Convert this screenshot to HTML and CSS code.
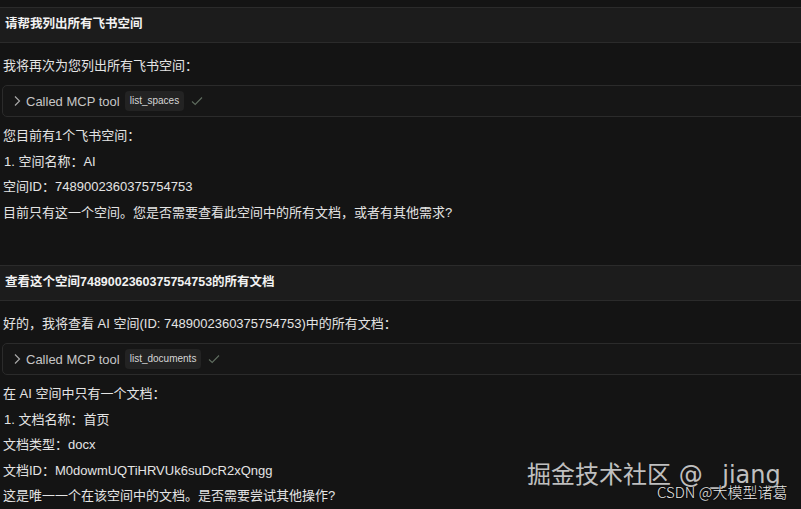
FILE: index.html
```html
<!DOCTYPE html>
<html lang="zh-CN">
<head>
  <meta charset="UTF-8">
  <meta name="viewport" content="width=device-width, initial-scale=1.0">
  <title>Cursor MCP 飞书空间</title>
  <link rel="stylesheet" href="styles.css">
</head>
<body>
  <div class="chat">
    <div class="user-msg">请帮我列出所有飞书空间</div>
    <div class="reply">
      <p class="lead">我将再次为您列出所有飞书空间：</p>
      <div class="tool-call">
        <svg class="chevron" width="8" height="12" viewBox="0 0 8 12"><path d="M2 1.5 L6.5 6 L2 10.5" fill="none" stroke="currentColor" stroke-width="1.2"/></svg>
        <span class="tool-label">Called MCP tool</span>
        <span class="tool-name">list_spaces</span>
        <svg class="check" width="12" height="10" viewBox="0 0 12 10"><path d="M1 5.5 L4.2 8.5 L11 1.5" fill="none" stroke="currentColor" stroke-width="1.1"/></svg>
      </div>
      <p>您目前有1个飞书空间：</p>
      <p class="item">1. 空间名称：AI</p>
      <p>空间ID：7489002360375754753</p>
      <p>目前只有这一个空间。您是否需要查看此空间中的所有文档，或者有其他需求?</p>
    </div>

    <div class="user-msg second">查看这个空间7489002360375754753的所有文档</div>
    <div class="reply">
      <p class="lead">好的，我将查看 AI 空间(ID: 7489002360375754753)中的所有文档：</p>
      <div class="tool-call">
        <svg class="chevron" width="8" height="12" viewBox="0 0 8 12"><path d="M2 1.5 L6.5 6 L2 10.5" fill="none" stroke="currentColor" stroke-width="1.2"/></svg>
        <span class="tool-label">Called MCP tool</span>
        <span class="tool-name">list_documents</span>
        <svg class="check" width="12" height="10" viewBox="0 0 12 10"><path d="M1 5.5 L4.2 8.5 L11 1.5" fill="none" stroke="currentColor" stroke-width="1.1"/></svg>
      </div>
      <p>在 AI 空间中只有一个文档：</p>
      <p class="item">1. 文档名称：首页</p>
      <p>文档类型：docx</p>
      <p>文档ID：M0dowmUQTiHRVUk6suDcR2xQngg</p>
      <p>这是唯一一个在该空间中的文档。是否需要尝试其他操作?</p>
    </div>
  </div>

  <div class="watermark">掘金技术社区 @ _jiang</div>
  <div class="watermark-csdn">CSDN @大模型诸葛</div>
</body>
</html>
```

FILE: styles.css
```css
:root {
  --color-background: #141414;
  --color-user: #1c1c1c;
  --color-border: #2b2b2b;
  --color-text: #e4e4e4;
  --color-muted: #c6c6c6;
  --color-pill: #232323;
  --color-check: #5f6d5f;
}

body {
  background-color: var(--color-background);
  color: var(--color-text);
  font-family: "Liberation Sans", "Noto Sans CJK SC", sans-serif;
  margin: 0;
  overflow: hidden;
  position: relative;
  height: 509px;
}

.chat {
  padding-top: 7px;
}

.user-msg {
  background-color: var(--color-user);
  border-top: 1px solid var(--color-border);
  border-bottom: 1px solid var(--color-border);
  height: 34px;
  line-height: 33px;
  padding: 0 5px;
  font-size: 12.5px;
  font-weight: 700;
  color: #f2f2f2;
}

.user-msg.second {
  margin-top: 40px;
}

.reply {
  padding-left: 3px;
  font-size: 13px;
}

.reply p {
  margin: 0;
  line-height: 25.5px;
}

.reply .lead {
  margin-top: 10px;
  line-height: 26px;
}

.reply .item {
  padding-left: 1px;
}

.tool-call {
  display: flex;
  align-items: center;
  height: 30px;
  margin: 6px -12px 6px -1px;
  padding-left: 10px;
  border: 1px solid var(--color-border);
  border-radius: 5px;
  background-color: #161616;
}

.chevron {
  color: #a8a8a8;
  margin-right: 5px;
}

.tool-label {
  color: var(--color-muted);
  font-size: 13px;
  margin-right: 5px;
}

.tool-name {
  background-color: var(--color-pill);
  color: #d6d6d6;
  font-size: 10px;
  line-height: 20px;
  padding: 0 5px;
  border-radius: 4px;
  margin-right: 7px;
}

.check {
  color: var(--color-check);
}

.watermark {
  position: absolute;
  left: 527px;
  top: 461px;
  font-family: "DejaVu Sans", "Noto Sans CJK SC", sans-serif;
  font-size: 24px;
  line-height: 28px;
  color: rgba(225, 225, 225, 0.85);
  white-space: nowrap;
}

.watermark-csdn {
  position: absolute;
  left: 657px;
  top: 483px;
  font-family: "Noto Sans CJK SC", sans-serif;
  font-size: 15px;
  font-weight: 300;
  line-height: 18px;
  color: #e8e8e8;
  text-shadow: 0 0 2px #000, 0 0 1px #000;
  white-space: nowrap;
}
```
